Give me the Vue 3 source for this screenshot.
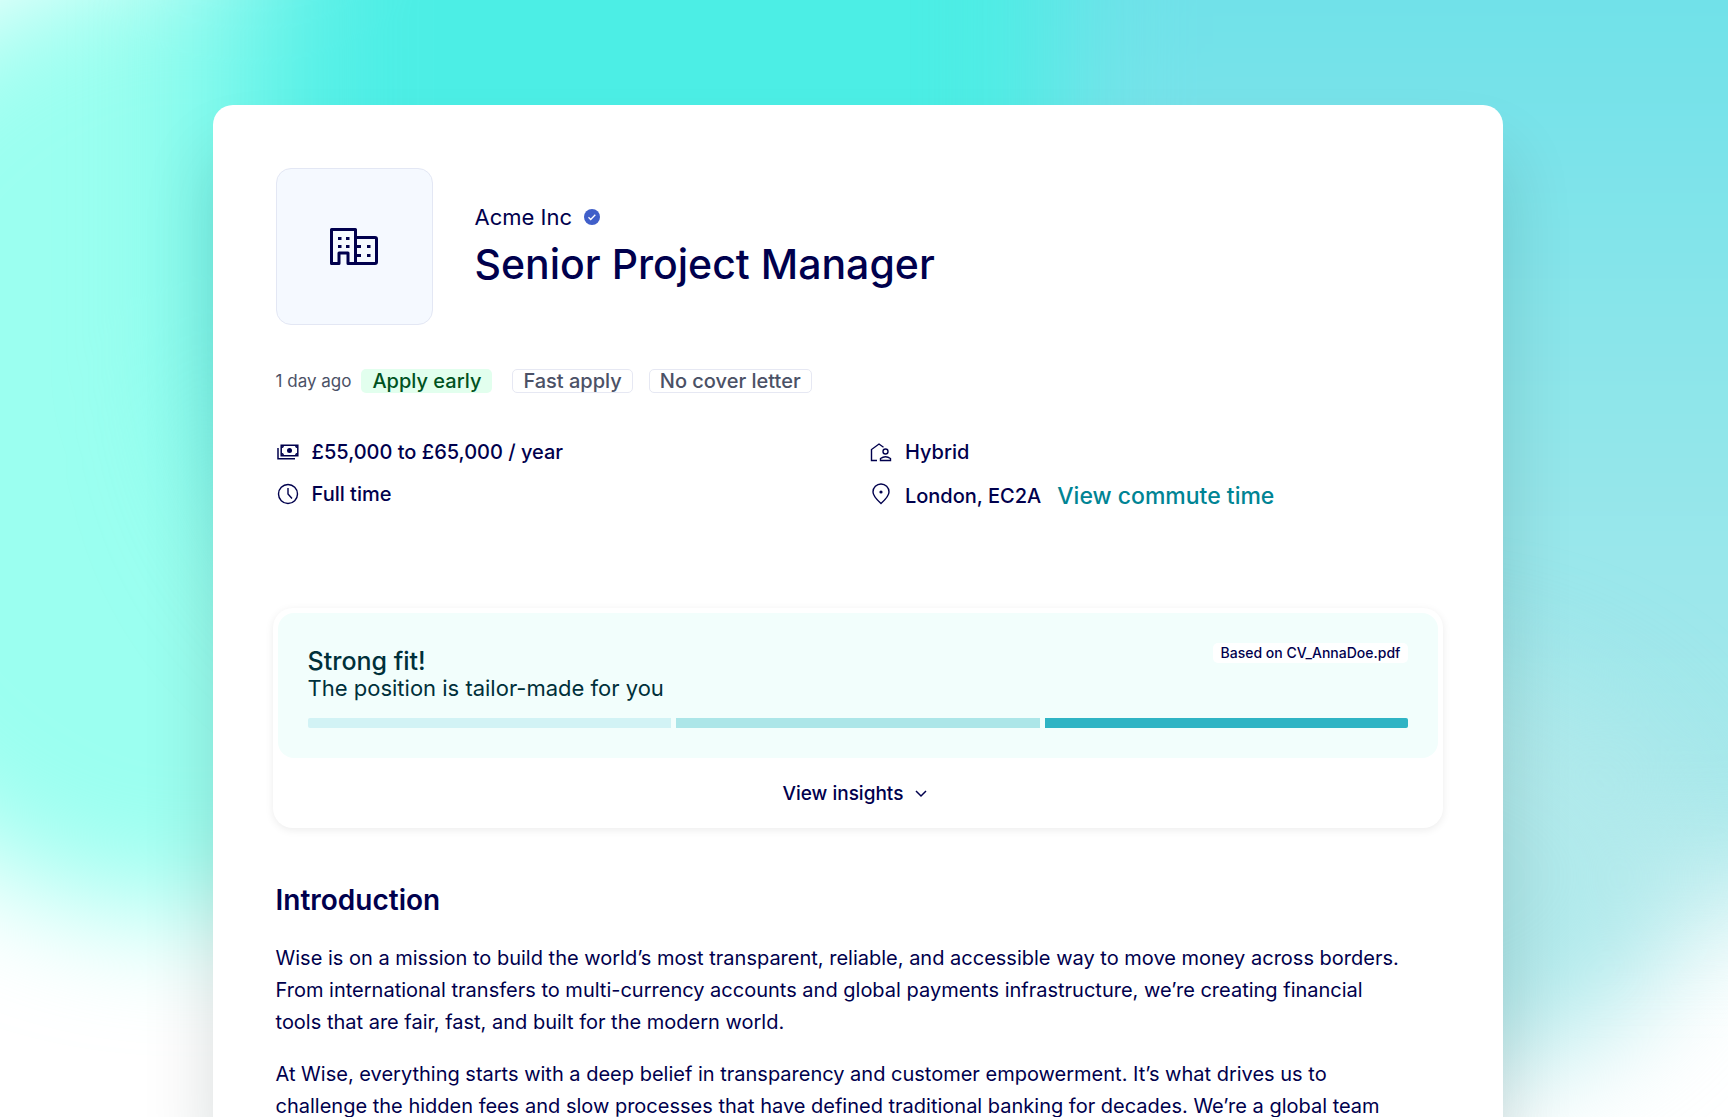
<template>
  <div class="page">
    <div class="backdrop" aria-hidden="true">
      <span class="blob mint"></span>
      <span class="blob aqua"></span>
      <span class="blob sky"></span>
      <span class="blob mist"></span>
    </div>

    <main class="job">
      <header class="job-head">
        <div class="logo">
          <svg width="48" height="38" viewBox="0 0 48 38" fill="none" stroke="currentColor" stroke-width="3" stroke-linejoin="round">
            <path d="M1.5 1.5h24v34H18V25H9v10.500H1.500z" />
            <path d="M25.500 9.500h19.500q1.500 0 1.500 1.500v23q0 1.500-1.500 1.500h-19.500" />
            <path class="solid" d="M8 9h3.500v3H8zM16 9h3.500v3H16zM8 17h3.500v3H8zM16 17h3.500v3H16zM27 17h4v3h-4zM37 17h3.500v3H37zM27 26h4v3h-4zM37 26h3.500v3H37z" />
          </svg>
        </div>
        <div>
          <p class="company">
            Acme Inc
            <svg width="16" height="16" viewBox="0 0 16 16" role="img" aria-label="Verified">
              <circle cx="8" cy="8" r="8" fill="#405fc9" />
              <path d="M4.500 8.300l2.200 2.200 4.600-4.800" fill="none" stroke="#fff" stroke-width="1.300" />
            </svg>
          </p>
          <h1>Senior Project Manager</h1>
        </div>
      </header>

      <div class="tags">
        <span class="age">1 day ago</span>
        <span class="tag early">Apply early</span>
        <span v-for="tag in tags" :key="tag" class="tag">{{ tag }}</span>
      </div>

      <ul class="facts">
        <li>
          <svg width="24" height="24" viewBox="0 0 24 24" fill="none" stroke="currentColor" stroke-width="1.500">
            <path d="M5.200 5.200h16.600v10.600H5.200zM2 8v10.800h17" />
            <circle class="solid" cx="13.500" cy="10.500" r="2.500" />
            <path d="M5.200 7.500q2 0 2-2M21.800 7.500q-2 0-2-2M5.200 13.500q2 0 2 2M21.800 13.500q-2 0-2 2" />
          </svg>
          £55,000 to £65,000 / year
        </li>
        <li>
          <svg width="24" height="24" viewBox="0 0 24 24" fill="none" stroke="currentColor" stroke-width="1.400">
            <path d="M8 20.500H2.500V9.500L10 4l4.500 3.300" />
            <circle cx="16.500" cy="11.500" r="2.500" />
            <path d="M11.500 20.500v-2q5-3.500 10 0v2z" />
          </svg>
          Hybrid
        </li>
        <li>
          <svg width="24" height="24" viewBox="0 0 24 24" fill="none" stroke="currentColor" stroke-width="1.400">
            <circle cx="12" cy="12" r="9.500" />
            <path d="M12 6v6l4 4.500" />
          </svg>
          Full time
        </li>
        <li class="location">
          <svg width="24" height="24" viewBox="0 0 24 24" fill="none" stroke="currentColor" stroke-width="1.400">
            <path d="M12 21.500C7 17 4 13.500 4 10a8 8 0 0 1 16 0c0 3.500-3 7-8 11.500z" />
            <circle class="solid" cx="12" cy="10" r="1.600" />
          </svg>
          London, EC2A
          <a href="#commute">View commute time</a>
        </li>
      </ul>

      <section class="fit">
        <div class="fit-panel">
          <div class="fit-head">
            <div>
              <h2>Strong fit!</h2>
              <p>The position is tailor-made for you</p>
            </div>
            <span class="source">Based on CV_AnnaDoe.pdf</span>
          </div>
          <div class="meter">
            <span v-for="level in levels" :key="level" :class="level"></span>
          </div>
        </div>
        <button class="insights" type="button" :aria-expanded="open" @click="open = !open">
          View insights
          <svg width="12" height="8" viewBox="0 0 12 8" fill="none" stroke="currentColor" stroke-width="1.500">
            <path d="M1 1l5 5 5-5" />
          </svg>
        </button>
      </section>

      <section class="intro">
        <h2>Introduction</h2>
        <p v-for="(text, i) in intro" :key="i">{{ text }}</p>
      </section>
    </main>
  </div>
</template>

<script setup>
import { ref } from 'vue'

const open = ref(false)

const tags = ['Fast apply', 'No cover letter']
const levels = ['low', 'medium', 'high']

const intro = [
  'Wise is on a mission to build the world’s most transparent, reliable, and accessible way to move money across borders. From international transfers to multi-currency accounts and global payments infrastructure, we’re creating financial tools that are fair, fast, and built for the modern world.',
  'At Wise, everything starts with a deep belief in transparency and customer empowerment. It’s what drives us to challenge the hidden fees and slow processes that have defined traditional banking for decades. We’re a global team',
]
</script>

<style>
body {
  background: #ffffff;
}
</style>

<style scoped>
* {
  box-sizing: border-box;
}

.page {
  position: relative;
  min-height: 100vh;
  padding: 105px 13% 0 12.3%;
  font-family: Inter, 'Liberation Sans', sans-serif;
  font-size: 20px;
  color: #00004d;
}

/* soft colour clouds behind the card */
.backdrop {
  position: absolute;
  inset: 0 0 auto;
  height: 100vh;
  overflow: hidden;
}
.blob {
  position: absolute;
  border-radius: 50%;
  filter: blur(60px);
}
.mint {
  left: -14%;
  top: -4%;
  width: 50%;
  height: 86%;
  background: #9bfff0;
}
.aqua {
  left: 14%;
  top: -30%;
  width: 70%;
  height: 90%;
  border-radius: 30%;
  background: #4ceee5;
  filter: blur(80px);
}
.sky {
  left: 61%;
  top: -20%;
  width: 60%;
  height: 100%;
  border-radius: 10% 10% 30% 20%;
  background: linear-gradient(#6fe1e9 20%, #8ae5ea 50%, #b0e9eb);
}
.mist {
  left: 64%;
  top: 60%;
  width: 34%;
  height: 37%;
  background: #b0e9eb;
}

.job {
  position: relative;
  min-height: calc(100vh - 105px);
  padding: 63px 63px 0;
  background: #ffffff;
  border-radius: 20px 20px 0 0;
  box-shadow: 0 50px 70px rgba(0, 40, 40, 0.16);
}

.job-head {
  display: flex;
  align-items: center;
  gap: 42px;
}
.logo {
  display: flex;
  align-items: center;
  justify-content: center;
  width: 157px;
  height: 157px;
  background: #f5f9ff;
  border: 1px solid #e3e7f4;
  border-radius: 15px;
}
.solid {
  fill: currentColor;
  stroke: none;
}
.company {
  display: flex;
  align-items: center;
  gap: 12px;
  margin: 0;
  font-size: 22px;
  line-height: 30px;
}
h1 {
  margin: 4px 0 0;
  font-size: 41px;
  font-weight: 500;
  line-height: 56px;
}

.tags {
  display: flex;
  align-items: center;
  gap: 16px;
  margin-top: 44px;
  color: #4b5166;
}
.age {
  margin-right: -6px;
  font-size: 17px;
}
.tag {
  padding: 0 10px;
  font-weight: 500;
  line-height: 22px;
  border: 1px solid #e6e8f3;
  border-radius: 5px;
}
.early {
  margin-right: 4px;
  color: #00521f;
  background: #e2ffee;
  border-color: transparent;
}

.facts {
  display: grid;
  grid-template-columns: 1fr 1fr;
  align-items: start;
  gap: 14px 22px;
  margin: 45px 0 0;
  padding: 0;
  list-style: none;
  font-weight: 500;
}
.facts li {
  display: flex;
  align-items: flex-start;
  gap: 12px;
  line-height: 28px;
}
.facts .location {
  line-height: 32px;
}
.facts svg {
  margin: 2px 0;
}
.facts a {
  margin-left: 4px;
  font-size: 23px;
  color: #008494;
  text-decoration: none;
}

.fit {
  margin: 96px -3px 0;
  padding: 5px;
  border-radius: 20px;
  box-shadow: 0 2px 8px rgba(0, 0, 0, 0.08);
}
.fit-panel {
  padding: 30px;
  background: #f2fefc;
  border-radius: 16px;
  color: #00303a;
}
.fit-head {
  display: flex;
  align-items: flex-start;
  justify-content: space-between;
}
.fit h2 {
  margin: 4px 0 0;
  font-size: 25px;
  font-weight: 500;
  line-height: 28px;
}
.fit p {
  margin: 0;
  font-size: 22px;
  line-height: 26px;
}
.source {
  padding: 0 8px;
  font-size: 14px;
  font-weight: 500;
  line-height: 20px;
  color: #00004d;
  background: #ffffff;
  border-radius: 5px;
}
.meter {
  display: grid;
  grid-template-columns: repeat(3, 1fr);
  gap: 5px;
  margin-top: 17px;
}
.meter span {
  height: 10px;
}
.low {
  background: #d2f3f5;
  border-radius: 2px 0 0 2px;
}
.medium {
  background: #ace6e8;
}
.high {
  background: #2fb4c4;
  border-radius: 0 2px 2px 0;
}
.insights {
  display: flex;
  align-items: center;
  justify-content: center;
  gap: 12px;
  width: 100%;
  height: 65px;
  padding: 6px 6px 0 0;
  font: inherit;
  font-size: 19px;
  font-weight: 500;
  color: inherit;
  background: none;
  border: none;
  cursor: pointer;
}

.intro {
  padding-right: 34px;
}
.intro h2 {
  margin: 54px 0 24px;
  font-size: 28px;
  font-weight: 600;
  line-height: 36px;
}
.intro p {
  margin: 0 0 20px;
  line-height: 32px;
}
</style>
